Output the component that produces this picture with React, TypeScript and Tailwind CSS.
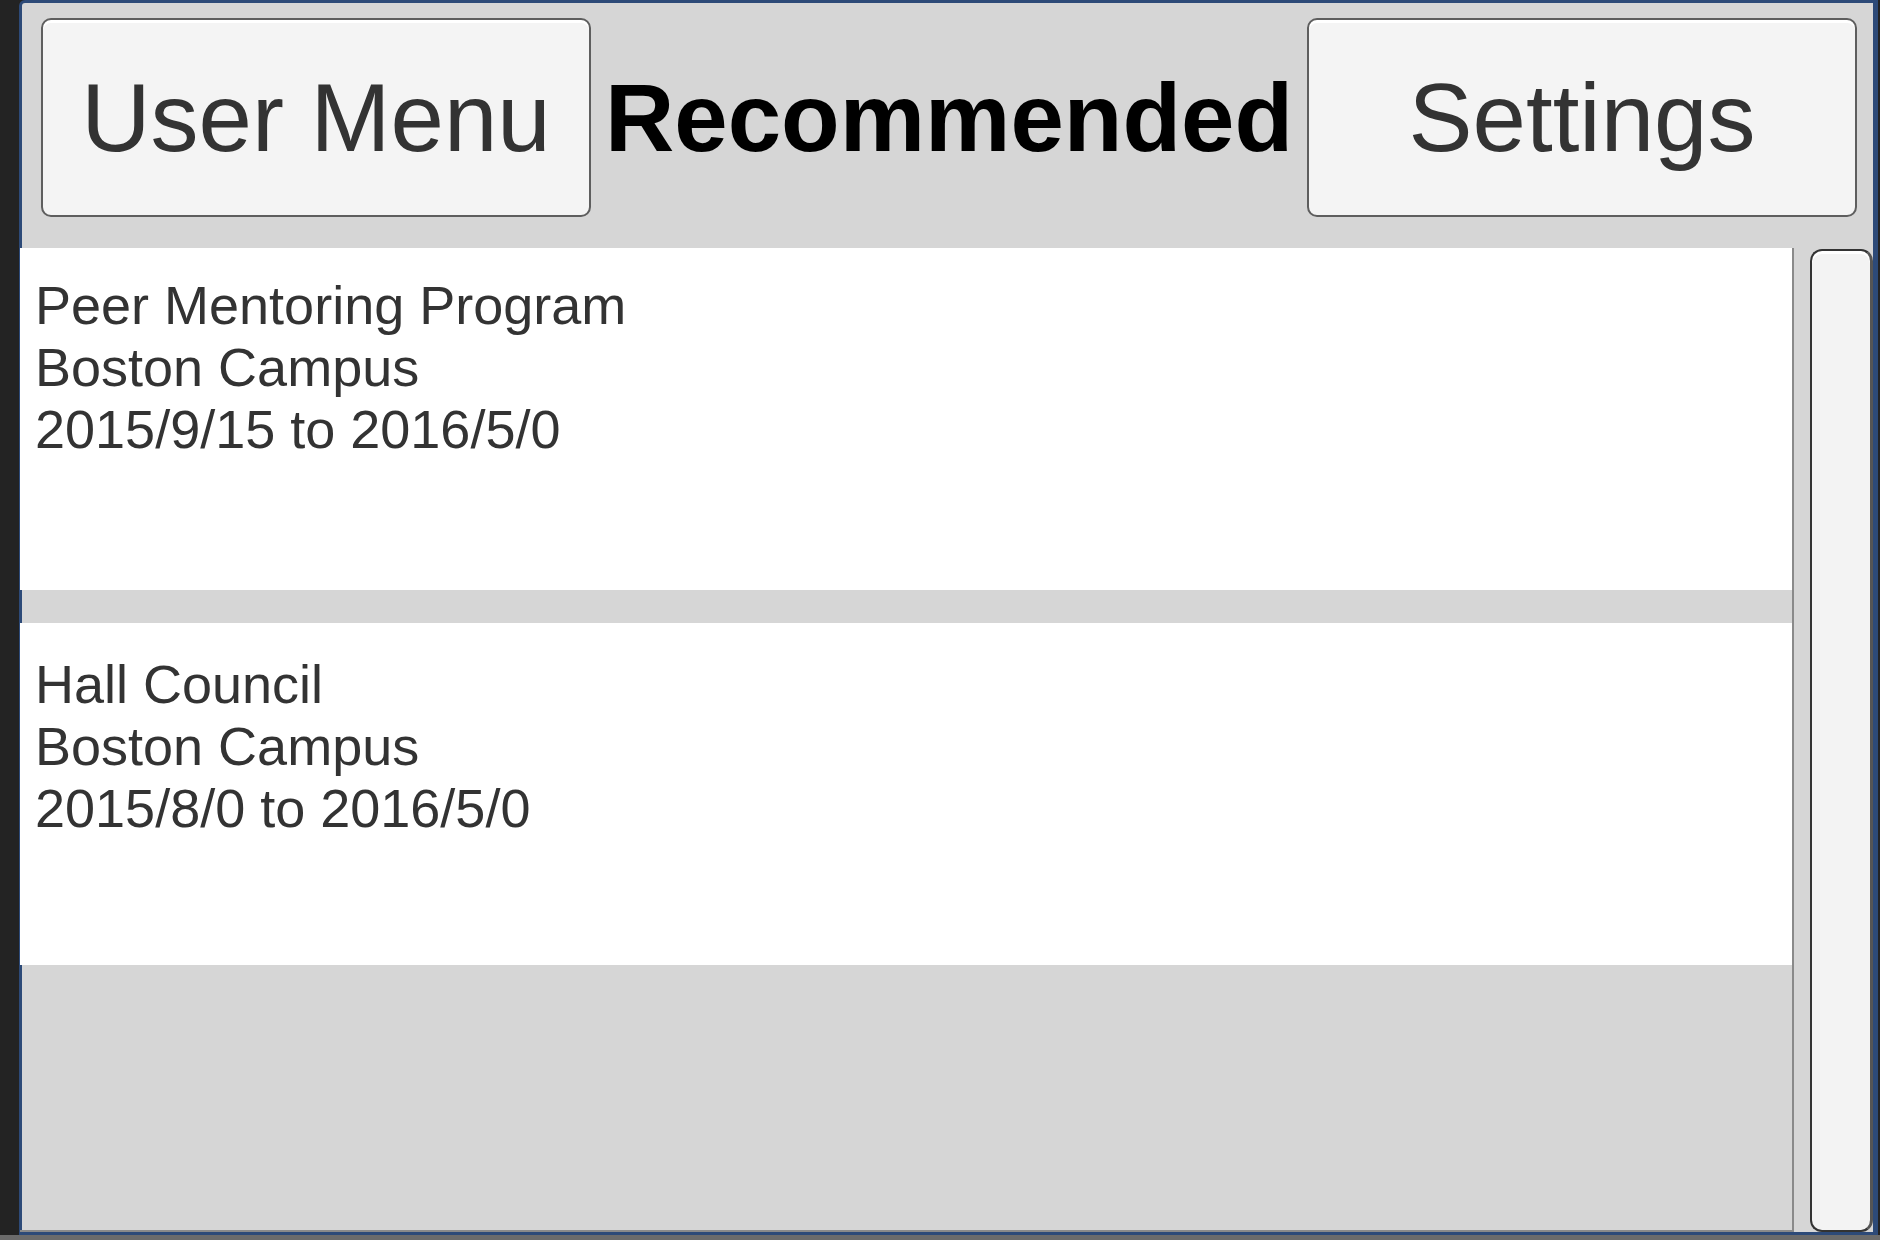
import React from 'react';

const items = [
  { title: 'Peer Mentoring Program', place: 'Boston Campus', dates: '2015/9/15 to 2016/5/0' },
  { title: 'Hall Council', place: 'Boston Campus', dates: '2015/8/0 to 2016/5/0' },
];

function MenuButton({ label }: { label: string }) {
  return (
    <button className="w-[550px] h-[199px] shrink-0 rounded-[10px] border-2 border-[#5e5e5e] bg-[#f4f4f4] shadow-[inset_0_3px_0_#ffffff] text-[96px] leading-none text-[#333333]">
      {label}
    </button>
  );
}

export default function App() {
  return (
    <div className="w-[1880px] h-[1240px] bg-[#232323] flex flex-col overflow-hidden font-['Liberation_Sans',Arial,sans-serif]">
      <div className="ml-[19px] mr-[2px] h-[1235px] shrink-0 border-t-[3px] border-l-[3px] border-b-[3px] border-r-[5px] border-[#2d4a78] rounded-tl-[6px] bg-[#d6d6d6] flex flex-col">
        <header className="h-[245px] shrink-0 flex items-start justify-between pl-[19px] pr-[16px] pt-[15px]">
          <MenuButton label="User Menu" />
          <h1 className="h-[199px] flex items-center text-[96px] leading-none font-bold text-black">Recommended</h1>
          <MenuButton label="Settings" />
        </header>

        <div className="flex-1 flex min-h-0">
          <div className="-ml-[2px] w-[1774px] shrink-0 border-r-2 border-b-2 border-[#8a8a8a] flex flex-col gap-[33px]">
            {items.map((it, i) => (
              <div
                key={it.title}
                className={`h-[342px] bg-white pl-[15px] text-[54px] leading-[62px] text-[#333333] ${i === 0 ? 'pt-[26px]' : 'pt-[30px]'}`}
              >
                <div>{it.title}</div>
                <div>{it.place}</div>
                <div>{it.dates}</div>
              </div>
            ))}
          </div>
          <div className="w-[16px] shrink-0" />
          <div className="w-[63px] shrink-0 mt-[1px] rounded-[12px] border-2 border-r-[3px] border-[#333333] border-r-[#555555] bg-[#f3f3f3] shadow-[inset_0_3px_0_#ffffff]" />
        </div>
      </div>
      <div className="flex-1 bg-[#6b6b6b]" />
    </div>
  );
}
